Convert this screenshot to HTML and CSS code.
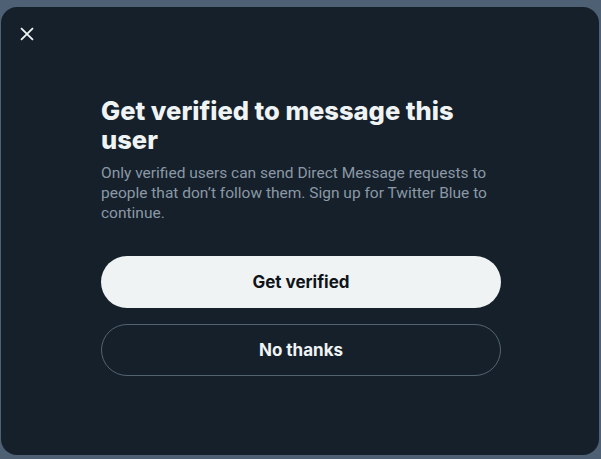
FILE: index.html
```html
<!DOCTYPE html>
<html lang="en">
<head>
<meta charset="utf-8">
<link rel="stylesheet" href="styles.css">
</head>
<body>
<div class="modal">
  <div class="header">
    <button class="close" aria-label="Close">
      <svg viewBox="0 0 24 24" width="22" height="22"><path d="M5.5 5.5l13 13M18.5 5.5l-13 13" stroke="#eff3f4" stroke-width="2" fill="none"/></svg>
    </button>
  </div>
  <div class="content">
    <h1 class="title">Get verified to message this user</h1>
    <p class="desc">Only verified users can send Direct Message requests to people that don’t follow them. Sign up for Twitter Blue to continue.</p>
    <div class="actions">
      <button class="btn btn-primary">Get verified</button>
      <button class="btn btn-outline">No thanks</button>
    </div>
  </div>
</div>
</body>
</html>
```
FILE: styles.css
```css
html, body {
  margin: 0;
  padding: 0;
}
body {
  background: #4e6073;
  width: 601px;
  height: 459px;
  overflow: hidden;
  font-family: Inter, Roboto, "Liberation Sans", sans-serif;
}
.modal {
  margin: 7px 0 0 1px;
  width: 598px;
  height: 448px;
  background: #15202b;
  border-radius: 16px;
  box-sizing: border-box;
}
.header {
  height: 53px;
  display: flex;
  align-items: center;
  padding: 1px 0 0 6px;
  box-sizing: border-box;
}
.close {
  width: 40px;
  height: 40px;
  border: 0;
  background: transparent;
  padding: 0;
  display: flex;
  align-items: center;
  justify-content: center;
  cursor: pointer;
}
.content {
  padding: 36px 98px 0 100px;
}
.title {
  margin: 0;
  font-size: 25.5px;
  line-height: 29px;
  font-weight: 800;
  color: #eff3f4;
}
.desc {
  margin: 9px 0 0 0;
  font-family: Roboto, "Liberation Sans", sans-serif;
  font-size: 15.5px;
  line-height: 20px;
  color: #8b98a5;
}
.actions {
  margin-top: 33px;
  display: flex;
  flex-direction: column;
  gap: 16px;
}
.btn {
  height: 52px;
  border-radius: 26px;
  font-family: inherit;
  font-size: 17px;
  font-weight: 700;
  cursor: pointer;
}
.btn-primary {
  background: #eff3f4;
  color: #0f1419;
  border: 0;
}
.btn-outline {
  background: transparent;
  color: #eff3f4;
  border: 1px solid #536471;
}
```
